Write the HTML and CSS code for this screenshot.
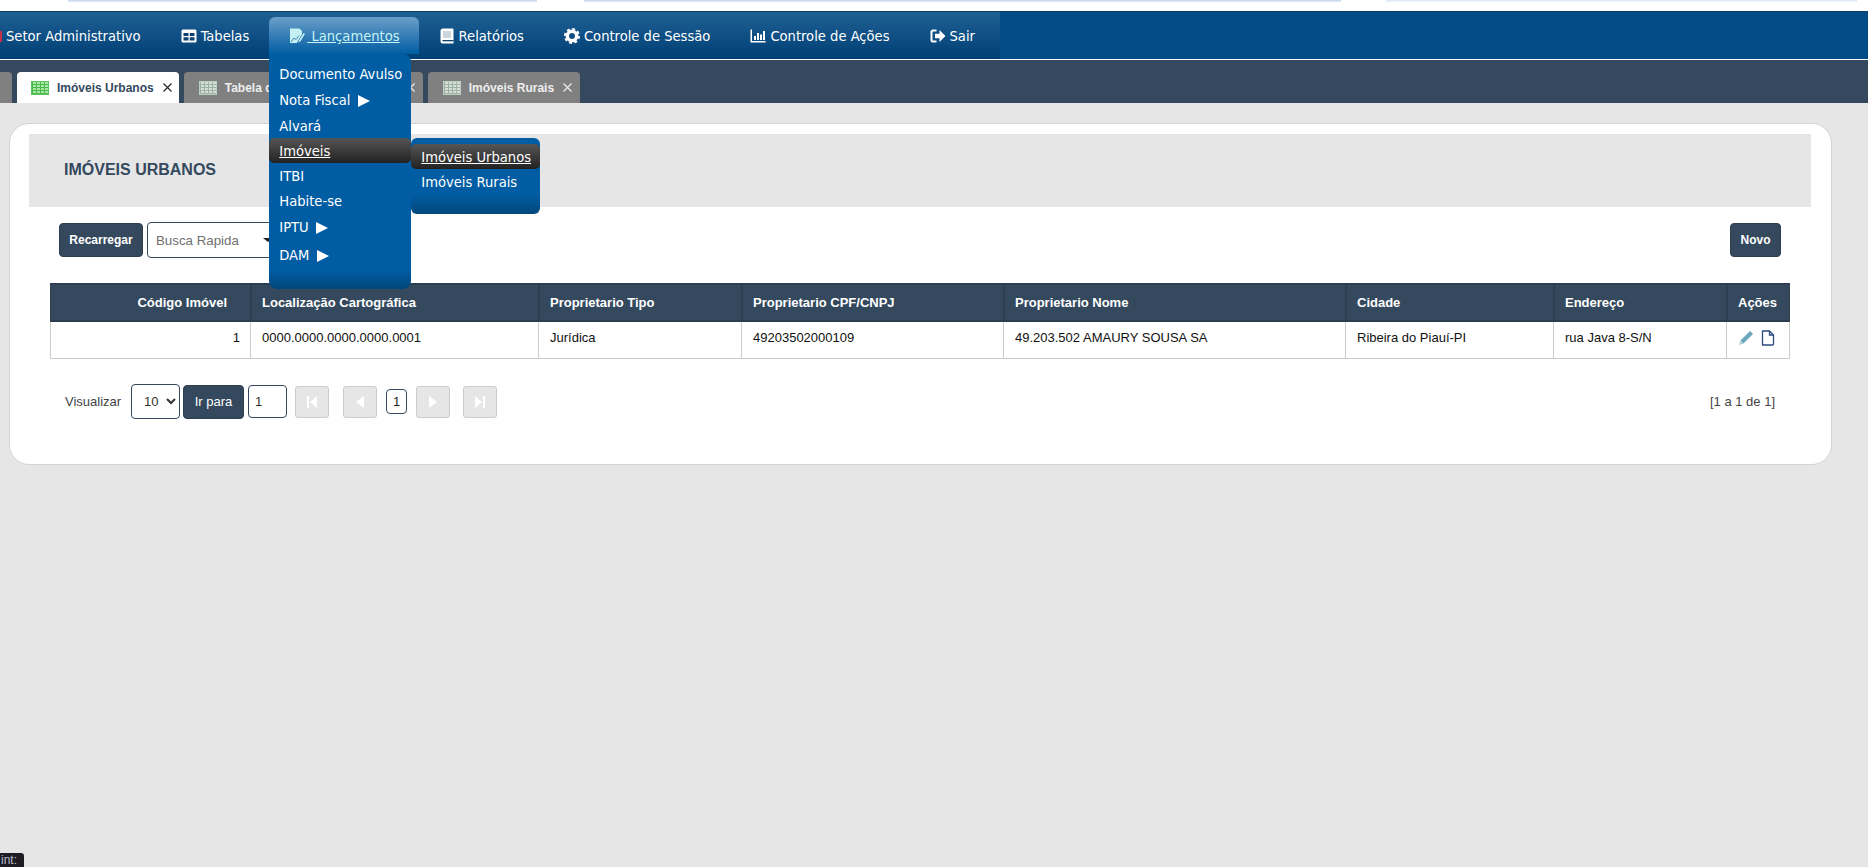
FILE: index.html
```html
<!DOCTYPE html>
<html lang="pt-BR">
<head>
<meta charset="utf-8">
<title>Imóveis Urbanos</title>
<link rel="stylesheet" href="styles.css">
</head>
<body>
<div class="topstrip"><span class="seg seg-a"></span><span class="seg seg-b"></span><span class="seg seg-c"></span></div>
<nav class="navbar">
  <ul class="menu">
    <li class="menu-item first">
      <svg class="nav-ic" viewBox="0 0 16 16"><rect x="1" y="3" width="15" height="11" fill="#c2304a"/></svg>
      <span>Setor Administrativo</span>
    </li>
    <li class="menu-item">
      <svg class="nav-ic" viewBox="0 0 16 16"><rect x="0.5" y="1.5" width="15" height="13" rx="1.5" fill="#fff"/><path d="M2.5 5h5v3h-5zM8.8 5h4.7v3H8.800zM2.500 9.300h5v3.200h-5zM8.800 9.300h4.700v3.200H8.800z" fill="#0b3f70"/></svg>
      <span>Tabelas</span>
    </li>
    <li class="menu-item active">
      <svg class="nav-ic wide" viewBox="0 0 18 16"><path d="M1 0.500h9.500L13 3v4l-4 6-1 2H1z" fill="#c6f1f4"/><path d="M2 14l3-4 2 1.500 3-4" fill="none" stroke="#3e86ad" stroke-width="1"/><path d="M9.500 12.500l5-8 2 1.300-5 8-2.800 1.200z" fill="#c6f1f4" stroke="#0c5e9c" stroke-width=".6"/></svg>
      <span class="menu-link"> Lançamentos</span>
      <ul class="dropdown">
        <li class="drop-item">Documento Avulso</li>
        <li class="drop-item tall">Nota Fiscal <i class="arrow"></i></li>
        <li class="drop-item">Alvará</li>
        <li class="drop-item hover"><u>Imóveis</u>
          <ul class="dropdown sub">
            <li class="drop-item hover"><u>Imóveis Urbanos</u></li>
            <li class="drop-item">Imóveis Rurais</li>
          </ul>
        </li>
        <li class="drop-item">ITBI</li>
        <li class="drop-item">Habite-se</li>
        <li class="drop-item taller">IPTU <i class="arrow"></i></li>
        <li class="drop-item taller">DAM <i class="arrow"></i></li>
      </ul>
    </li>
    <li class="menu-item">
      <svg class="nav-ic" viewBox="0 0 16 16"><path d="M4 0.500h9.500a1 1 0 0 1 1 1V15.500H3.500A2 2 0 0 1 1.500 13.500V3A2.500 2.500 0 0 1 4 0.500z" fill="#fff"/><rect x="4" y="3" width="8" height="7" fill="#c9d6e0"/><rect x="3.500" y="12" width="11" height="1.300" fill="#0b4274"/></svg>
      <span>Relatórios</span>
    </li>
    <li class="menu-item">
      <svg class="nav-ic" viewBox="0 0 16 16"><circle cx="8" cy="8" r="4.700" fill="none" stroke="#fff" stroke-width="3.400"/><circle cx="8" cy="8" r="7" fill="none" stroke="#fff" stroke-width="2" stroke-dasharray="2.900 2.600"/></svg>
      <span>Controle de Sessão</span>
    </li>
    <li class="menu-item">
      <svg class="nav-ic" viewBox="0 0 16 16"><path d="M0.500 1.500h1.500v11.500h13.500v1.500H0.500z" fill="#fff"/><path d="M4 8h2v4H4zM7 5h2v7H7zM10 6.500h2V12h-2zM13 3h2v9h-2z" fill="#fff"/></svg>
      <span>Controle de Ações</span>
    </li>
    <li class="menu-item last">
      <svg class="nav-ic" viewBox="0 0 16 16"><path d="M6.500 2.500H2.800A1.300 1.300 0 0 0 1.500 3.800v8.400a1.300 1.300 0 0 0 1.300 1.300h3.700" fill="none" stroke="#fff" stroke-width="2"/><path d="M5 5.700h4.500V2L15.500 8 9.500 14v-3.700H5z" fill="#fff"/></svg>
      <span>Sair</span>
    </li>
  </ul>
</nav>
<div class="tabs">
  <div class="tab stub"></div>
  <div class="tab current"><i class="grid-ic"></i><span class="tab-text">Imóveis Urbanos</span><svg class="tab-x" viewBox="0 0 9 9"><path d="M.5.500l8 8M8.500.500l-8 8"/></svg></div>
  <div class="tab long"><i class="grid-ic"></i><span class="tab-text">Tabela de Imóveis Cadastro</span><svg class="tab-x" viewBox="0 0 9 9"><path d="M.5.500l8 8M8.500.500l-8 8"/></svg></div>
  <div class="tab"><i class="grid-ic"></i><span class="tab-text">Imóveis Rurais</span><svg class="tab-x" viewBox="0 0 9 9"><path d="M.5.500l8 8M8.500.500l-8 8"/></svg></div>
</div>
<main class="card">
  <header class="card-head"><h1 class="card-title">IMÓVEIS URBANOS</h1></header>
  <div class="toolbar">
    <button class="btn reload">Recarregar</button>
    <div class="quick"><span>Busca Rapida</span><i class="caret"></i></div>
    <button class="btn novo">Novo</button>
  </div>
  <div class="table-wrap">
    <table class="grid">
      <colgroup><col class="c1"><col class="c2"><col class="c3"><col class="c4"><col class="c5"><col class="c6"><col class="c7"><col class="c8"></colgroup>
      <thead>
        <tr><th class="right">Código Imóvel</th><th>Localização Cartográfica</th><th>Proprietario Tipo</th><th>Proprietario CPF/CNPJ</th><th>Proprietario Nome</th><th>Cidade</th><th>Endereço</th><th>Ações</th></tr>
      </thead>
      <tbody>
        <tr>
          <td class="right">1</td><td>0000.0000.0000.0000.0001</td><td>Jurídica</td><td>49203502000109</td><td>49.203.502 AMAURY SOUSA SA</td><td>Ribeira do Piauí-PI</td><td>rua Java 8-S/N</td>
          <td class="actions">
            <svg class="act pencil" viewBox="0 0 16 16"><path d="M12 1l3 3L5.500 13.500l-3-3z" fill="#6ba6bd"/><path d="M2.500 10.500l3 3L1 15z" fill="#a9ccd8"/></svg>
            <svg class="act doc" viewBox="0 0 14 16"><path d="M1.500 1h7l4 4v9a1 1 0 0 1-1 1h-10z" fill="#fff" stroke="#2b4a80" stroke-width="1.300" stroke-linejoin="round"/><path d="M8.500 1v4h4" fill="none" stroke="#2b4a80" stroke-width="1.300"/></svg>
          </td>
        </tr>
      </tbody>
    </table>
  </div>
  <div class="pager">
    <span class="pager-label">Visualizar</span>
    <select class="size"><option>10</option></select>
    <button class="btn goto">Ir para</button>
    <input class="page-input" value="1">
    <button class="pg first-pg"><svg viewBox="0 0 14 16"><path d="M2 2h2v12H2zM12 2v12L5 8z" fill="#fff"/></svg></button>
    <button class="pg prev"><svg viewBox="0 0 14 16"><path d="M11 2v12L3 8z" fill="#fff"/></svg></button>
    <span class="cur">1</span>
    <button class="pg next"><svg viewBox="0 0 14 16"><path d="M3 2v12l8-6z" fill="#fff"/></svg></button>
    <button class="pg last-pg"><svg viewBox="0 0 14 16"><path d="M2 2v12l7-6zM10 2h2v12h-2z" fill="#fff"/></svg></button>
    <span class="count">[1 a 1 de 1]</span>
  </div>
</main>
<div class="hint">int:</div>
</body>
</html>
```
FILE: styles.css
```css
* { box-sizing: border-box; }
html, body { margin: 0; height: 867px; overflow: hidden; }
body { background: #e6e6e6; font-family: "Liberation Sans", Arial, sans-serif; position: relative; }
ul { list-style: none; margin: 0; padding: 0; }

.topstrip { height: 11px; background: #fff; display: flex; align-items: flex-start; }
.seg { height: 2px; background: linear-gradient(#c5d6ec, #e6eef8); }
.seg-a { margin-left: 68px; width: 469px; }
.seg-b { margin-left: 47px; width: 757px; }
.seg-c { margin-left: 45px; width: 471px; opacity: .6; }

.navbar { height: 49px; background: #034b87; border-top: 1px solid #0a3f66; border-bottom: 1px solid #fff; }
.menu { display: flex; width: 1000px; height: 47px; background: linear-gradient(#1f6093, #003f75); font-family: "DejaVu Sans Condensed", "DejaVu Sans", Verdana, sans-serif; font-size: 14.600px; color: #fff; }
.menu-item { display: flex; align-items: center; gap: 4px; padding: 0 20px; height: 47px; position: relative; white-space: nowrap; }
.menu-item.first { margin-left: -34px; }
.menu-item.last { padding-right: 24px; }
.menu-item.active { height: 37px; margin-top: 5px; padding: 0 19px 0 20px; gap: 0; border-radius: 6px 6px 0 0; background: linear-gradient(#6a9fc9, #005da3); color: #c6f3f5; }
.menu-link { text-decoration: underline; white-space: pre; }
.nav-ic { width: 16px; height: 16px; flex: none; }
.nav-ic.wide { width: 18px; }

.dropdown { position: absolute; left: 0; top: 37px; width: 142px; padding: 7px 0 20px; background: linear-gradient(to top, #03477c, #005da3 20px); border-radius: 0 8px 8px 8px; color: #fff; z-index: 5; }
.drop-item { height: 25px; line-height: 25px; padding: 0 10px; position: relative; }
.drop-item.tall { height: 27px; line-height: 27px; }
.drop-item.taller { height: 28px; line-height: 28px; }
.drop-item.hover { background: linear-gradient(#555, #222); border-radius: 5px; }
.arrow { display: inline-block; width: 0; height: 0; border-left: 12px solid #fff; border-top: 6.500px solid transparent; border-bottom: 6.500px solid transparent; vertical-align: -2px; margin-left: 3px; }
.dropdown.sub { left: 142px; top: 0; width: 129px; padding: 6px 0 20px; border-radius: 6px; }
.sub .drop-item { line-height: 26px; }

.tabs { height: 43px; background: #34495e; display: flex; align-items: flex-end; gap: 5px; font-size: 12px; font-weight: bold; }
.tab { height: 31px; display: flex; align-items: center; background: #808080; color: #eee; border-radius: 4px 4px 0 0; padding: 0 8px 0 15px; white-space: nowrap; }
.tab.stub { width: 12px; padding: 0; border-radius: 0 4px 0 0; }
.tab.current { background: #fff; color: #34495e; padding: 0 7px 0 14px; }
.tab.long { width: 239px; }
.tab.long .tab-x { margin-left: auto; }
.grid-ic { width: 18px; height: 14px; margin-right: 8px; flex: none; border: 1px solid #bcd0c0; background-color: #d6ded8; background-image: repeating-linear-gradient(90deg, #9fb3a5 0 1px, transparent 1px 4px), repeating-linear-gradient(0deg, #9fb3a5 0 1px, transparent 1px 3px); }
.current .grid-ic { border-color: #5cc45c; background-color: #a6e8a6; background-image: repeating-linear-gradient(90deg, #4cb84c 0 1px, transparent 1px 4px), repeating-linear-gradient(0deg, #4cb84c 0 1px, transparent 1px 3px); }
.tab-x { width: 9px; height: 9px; margin-left: 9px; flex: none; fill: none; stroke: #eee; stroke-width: 1.100; }
.current .tab-x { stroke: #222; }

.card { width: 1823px; height: 342px; margin: 20px 0 0 9px; background: #fff; border: 1px solid #d3d3d3; border-radius: 20px; padding: 10px 20px 10px 19px; }
.card-head { height: 73px; background: #e6e6e6; display: flex; align-items: center; padding: 0 0 2px 35px; }
.card-title { margin: 0; font-size: 16px; font-weight: bold; color: #34495e; }

.toolbar { display: flex; align-items: center; height: 36px; margin-top: 15px; padding: 0 30px; gap: 4px; }
.btn { height: 34px; background: #34495e; border: 1px solid #2c3e50; border-radius: 4px; color: #fff; font: bold 12px "Liberation Sans", Arial, sans-serif; padding: 0; }
.btn.reload { width: 84px; }
.quick { width: 135px; height: 36px; border: 1px solid #34495e; border-radius: 4px; display: flex; align-items: center; justify-content: space-between; padding: 0 8px; color: #6f6f6f; font-size: 13.300px; }
.caret { border-top: 4px solid #222; border-left: 5px solid transparent; border-right: 5px solid transparent; }
.btn.novo { margin-left: auto; width: 51px; }

.table-wrap { padding-left: 21px; margin-top: 25px; }
.grid { width: 1740px; table-layout: fixed; border-collapse: separate; border-spacing: 0; font-size: 13px; }
.c1 { width: 201px; } .c2 { width: 288px; } .c3 { width: 203px; } .c4 { width: 262px; }
.c5 { width: 342px; } .c6 { width: 208px; } .c7 { width: 173px; } .c8 { width: 63px; }
.grid th { height: 39px; background: #34495e; color: #fff; border: 1px solid #2c3e50; border-width: 2px 1px; text-align: left; padding: 0 10px; font-weight: bold; }
.grid td { height: 37px; border-right: 1px solid #ccc; border-bottom: 1px solid #ccc; padding: 8px 10px 0 11px; vertical-align: top; color: #111; }
.grid td:first-child { border-left: 1px solid #ccc; }
.grid td.right { text-align: right; }
.grid th.right { text-align: right; padding-right: 23px; }
.grid td.actions { padding: 8px 0 0 11px; }
.act { height: 16px; display: inline-block; vertical-align: top; }
.pencil { width: 16px; }
.doc { width: 14px; margin-left: 3px; }

.pager { display: flex; align-items: center; height: 35px; margin-top: 25px; padding: 0 36px; font-size: 13px; color: #444; }
.pager-label { width: 66px; }
.size { width: 49px; height: 35px; border: 1px solid #34495e; border-radius: 4px; background: #fff; font: 13px "Liberation Sans", Arial, sans-serif; color: #333; padding-left: 8px; }
.btn.goto { width: 61px; height: 34px; margin-left: 3px; font-weight: normal; font-size: 13px; }
.page-input { width: 39px; height: 33px; margin-left: 4px; border: 1px solid #34495e; border-radius: 4px; padding: 0 6px; font: 13px "Liberation Sans", Arial, sans-serif; color: #333; }
.pg { width: 34px; height: 32px; background: #e6e6e6; border: 1px solid #ccc; border-radius: 3px; padding: 0; display: flex; align-items: center; justify-content: center; }
.pg svg { width: 14px; height: 16px; }
.first-pg { margin-left: 8px; }
.prev { margin-left: 14px; }
.cur { width: 21px; height: 25px; margin-left: 9px; border: 1px solid #34495e; border-radius: 4px; display: flex; align-items: center; justify-content: center; color: #222; }
.next { margin-left: 9px; }
.last-pg { margin-left: 13px; }
.count { margin-left: auto; }

.hint { position: absolute; left: 0; bottom: 0; width: 24px; height: 14px; background: #1c1c22; border-radius: 0 3px 0 0; color: #bbc; font-size: 12px; line-height: 14px; padding-left: 1px; white-space: nowrap; }
```
